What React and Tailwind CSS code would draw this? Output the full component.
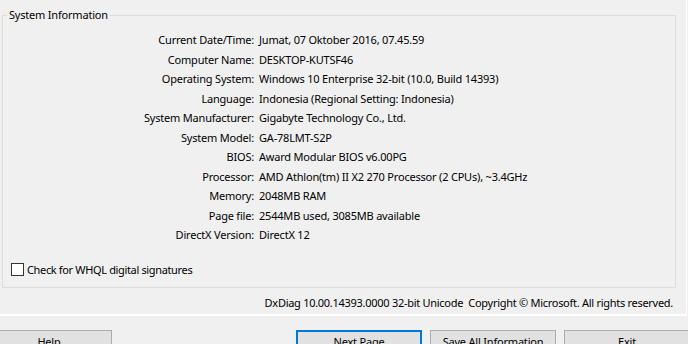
const ROWS = [
  ['Current Date/Time:', 'Jumat, 07 Oktober 2016, 07.45.59'],
  ['Computer Name:', 'DESKTOP-KUTSF46'],
  ['Operating System:', 'Windows 10 Enterprise 32-bit (10.0, Build 14393)'],
  ['Language:', 'Indonesia (Regional Setting: Indonesia)'],
  ['System Manufacturer:', 'Gigabyte Technology Co., Ltd.'],
  ['System Model:', 'GA-78LMT-S2P'],
  ['BIOS:', 'Award Modular BIOS v6.00PG'],
  ['Processor:', 'AMD Athlon(tm) II X2 270 Processor (2 CPUs), ~3.4GHz'],
  ['Memory:', '2048MB RAM'],
  ['Page file:', '2544MB used, 3085MB available'],
  ['DirectX Version:', 'DirectX 12'],
]

function Button({ children, focused, className = '' }) {
  return (
    <button
      type="button"
      className={
        'h-[24px] w-[126px] shrink-0 bg-[#e1e1e1] leading-[20px] text-black ' +
        (focused ? 'border-2 border-[#0078d7] ' : 'border border-[#adadad] ') +
        className
      }
    >
      {children}
    </button>
  )
}

export default function App() {
  return (
    <div className="h-[344px] w-[688px] overflow-hidden bg-[#f0f0f0] font-['Noto_Sans',sans-serif] text-[11px] tracking-[-0.2px] text-black">
      <div className="h-[316px] w-[687px] border-r border-b-2 border-white pt-[7px]">
        <fieldset className="ml-[2px] w-[674px] border border-[#dcdcdc] pb-[9px]">
          <legend className="ml-[4px] px-[2px] leading-[16px]">System Information</legend>
          <div className="grid grid-cols-[251px_1fr] gap-x-[5px] pt-[7px]">
            {ROWS.map(([label, value]) => (
              <div key={label} className="contents">
                <div className="text-right leading-[19.5px]">{label}</div>
                <div className="leading-[19.5px]">{value}</div>
              </div>
            ))}
          </div>
          <label className="mt-[17px] ml-[8px] flex items-center gap-[3px] leading-[16px] tracking-[-0.35px]">
            <span className="h-[13px] w-[13px] border border-[#333333] bg-white" />
            <span>Check for WHQL digital signatures</span>
          </label>
        </fieldset>
        <div className="mt-[7px] pr-[13px] text-right leading-[16px] tracking-[-0.28px]">
          DxDiag 10.00.14393.0000 32-bit Unicode&nbsp; Copyright © Microsoft. All rights reserved.
        </div>
      </div>
      <div className="mt-[14px] flex">
        <Button className="-ml-[14px]">Help</Button>
        <div className="flex-1" />
        <div className="-mr-[2px] flex gap-[8px]">
          <Button focused>Next Page</Button>
          <Button>Save All Information</Button>
          <Button>Exit</Button>
        </div>
      </div>
    </div>
  )
}
